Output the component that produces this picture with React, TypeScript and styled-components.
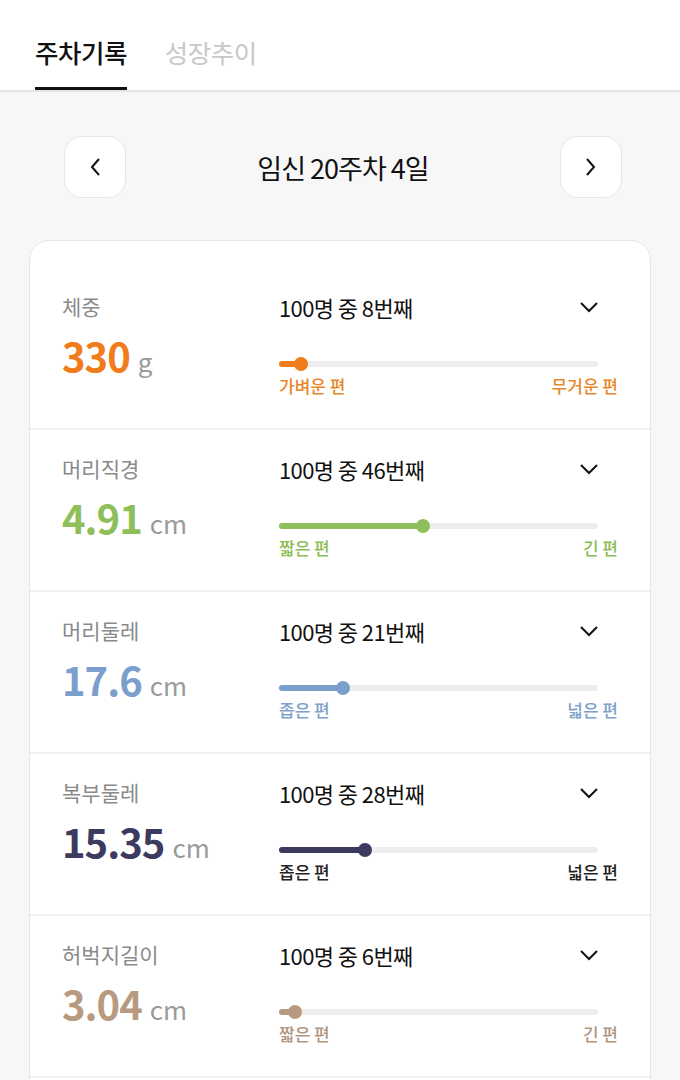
import React from "react";
import styled, { createGlobalStyle } from "styled-components";

const GlobalStyle = createGlobalStyle`
  * { box-sizing: border-box; }
  body {
    margin: 0;
    background: #f7f7f7;
    font-family: "Noto Sans CJK KR", "Noto Sans", sans-serif;
    color: #111;
  }
`;

type Metric = {
  label: string;
  value: string;
  unit: string;
  rank: number;
  low: string;
  high: string;
  color: string;
  textColor: string;
};

const metrics: Metric[] = [
  { label: "체중", value: "330", unit: "g", rank: 8, low: "가벼운 편", high: "무거운 편", color: "#f07c1b", textColor: "#e8872a" },
  { label: "머리직경", value: "4.91", unit: "cm", rank: 46, low: "짧은 편", high: "긴 편", color: "#8fbf5a", textColor: "#8dbb55" },
  { label: "머리둘레", value: "17.6", unit: "cm", rank: 21, low: "좁은 편", high: "넓은 편", color: "#7b9fcc", textColor: "#7ea2c9" },
  { label: "복부둘레", value: "15.35", unit: "cm", rank: 28, low: "좁은 편", high: "넓은 편", color: "#3c3a5e", textColor: "#222" },
  { label: "허벅지길이", value: "3.04", unit: "cm", rank: 6, low: "짧은 편", high: "긴 편", color: "#b89a80", textColor: "#b09580" },
];

const Chevron: React.FC<{ dir: "left" | "right" | "down" }> = ({ dir }) => {
  if (dir === "down") {
    return (
      <svg width="20" height="12" viewBox="0 0 20 12">
        <polyline points="2,2 10,10 18,2" fill="none" stroke="#111" strokeWidth="2" />
      </svg>
    );
  }
  const pts = dir === "left" ? "10,2 3,10 10,18" : "3,2 10,10 3,18";
  return (
    <svg width="13" height="20" viewBox="0 0 13 20">
      <polyline points={pts} fill="none" stroke="#111" strokeWidth="2" />
    </svg>
  );
};

const App: React.FC = () => {
  return (
    <>
      <GlobalStyle />
      <TabBar>
        <Tab active>주차기록</Tab>
        <Tab>성장추이</Tab>
      </TabBar>
      <WeekNav>
        <NavButton>
          <Chevron dir="left" />
        </NavButton>
        <WeekTitle>임신 20주차 4일</WeekTitle>
        <NavButton>
          <Chevron dir="right" />
        </NavButton>
      </WeekNav>
      <Card>
        {metrics.map((m) => (
          <Row key={m.label}>
            <LeftCol>
              <Label>{m.label}</Label>
              <Value color={m.color}>
                {m.value}
                <Unit>{m.unit}</Unit>
              </Value>
            </LeftCol>
            <RightCol>
              <RankLine>
                <Rank>100명 중 {m.rank}번째</Rank>
                <Chevron dir="down" />
              </RankLine>
              <Track>
                <Fill color={m.color} style={{ width: `${m.rank - 1}%` }}>
                  <Dot color={m.color} />
                </Fill>
              </Track>
              <Ends color={m.textColor}>
                <span>{m.low}</span>
                <span>{m.high}</span>
              </Ends>
            </RightCol>
          </Row>
        ))}
      </Card>
    </>
  );
};

export default App;

const TabBar = styled.div`
  display: flex;
  gap: 38px;
  height: 92px;
  padding: 0 35px;
  background: #fff;
  border-bottom: 2px solid #e4e4e4;
`;

const Tab = styled.div<{ active?: boolean }>`
  display: flex;
  align-items: center;
  height: 90px;
  padding-top: 16px;
  font-size: 25.5px;
  font-weight: ${(p) => (p.active ? 500 : 400)};
  letter-spacing: -0.5px;
  color: ${(p) => (p.active ? "#111" : "#c8c8c8")};
  border-bottom: 3px solid ${(p) => (p.active ? "#111" : "transparent")};
`;

const WeekNav = styled.div`
  display: flex;
  align-items: center;
  justify-content: space-between;
  padding: 44px 58px 0 64px;
`;

const NavButton = styled.button`
  width: 62px;
  height: 62px;
  display: flex;
  align-items: center;
  justify-content: center;
  background: #fff;
  border: 1.5px solid #e6e6e6;
  border-radius: 18px;
  padding: 0;
`;

const WeekTitle = styled.div`
  font-size: 27px;
  font-weight: 400;
  letter-spacing: -1px;
  color: #111;
`;

const Card = styled.div`
  margin: 42px 29px 0;
  padding: 27px 0 60px;
  background: #fff;
  border: 1.5px solid #e6e6e6;
  border-radius: 20px;
`;

const Row = styled.div`
  display: grid;
  grid-template-columns: 217px 1fr;
  height: 162px;
  padding: 0 32px;
  border-bottom: 2px solid #efefef;
`;

const LeftCol = styled.div`
  padding-top: 23px;
`;

const Label = styled.div`
  font-size: 21px;
  line-height: 30px;
  color: #8a8a8a;
`;

const Value = styled.div<{ color: string }>`
  margin-top: 9px;
  font-size: 40px;
  line-height: 50px;
  font-weight: 700;
  letter-spacing: -1px;
  color: ${(p) => p.color};
`;

const Unit = styled.span`
  margin-left: 8px;
  font-size: 26px;
  font-weight: 400;
  letter-spacing: 0;
  color: #9a9a9a;
`;

const RightCol = styled.div`
  padding-top: 24px;
`;

const RankLine = styled.div`
  display: flex;
  align-items: center;
  justify-content: space-between;
  padding-right: 19px;
`;

const Rank = styled.div`
  font-size: 22px;
  line-height: 30px;
  letter-spacing: -0.6px;
  color: #111;
`;

const Track = styled.div`
  margin: 39px 20px 0 0;
  height: 6px;
  border-radius: 3px;
  background: #eeeeee;
`;

const Fill = styled.div<{ color: string }>`
  position: relative;
  height: 6px;
  min-width: 12px;
  border-radius: 3px;
  background: ${(p) => p.color};
`;

const Dot = styled.div<{ color: string }>`
  position: absolute;
  right: -7px;
  top: -4px;
  width: 14px;
  height: 14px;
  border-radius: 50%;
  background: ${(p) => p.color};
`;

const Ends = styled.div<{ color: string }>`
  display: flex;
  justify-content: space-between;
  margin-top: 8px;
  font-size: 17px;
  line-height: 22px;
  font-weight: 500;
  color: ${(p) => p.color};
`;
